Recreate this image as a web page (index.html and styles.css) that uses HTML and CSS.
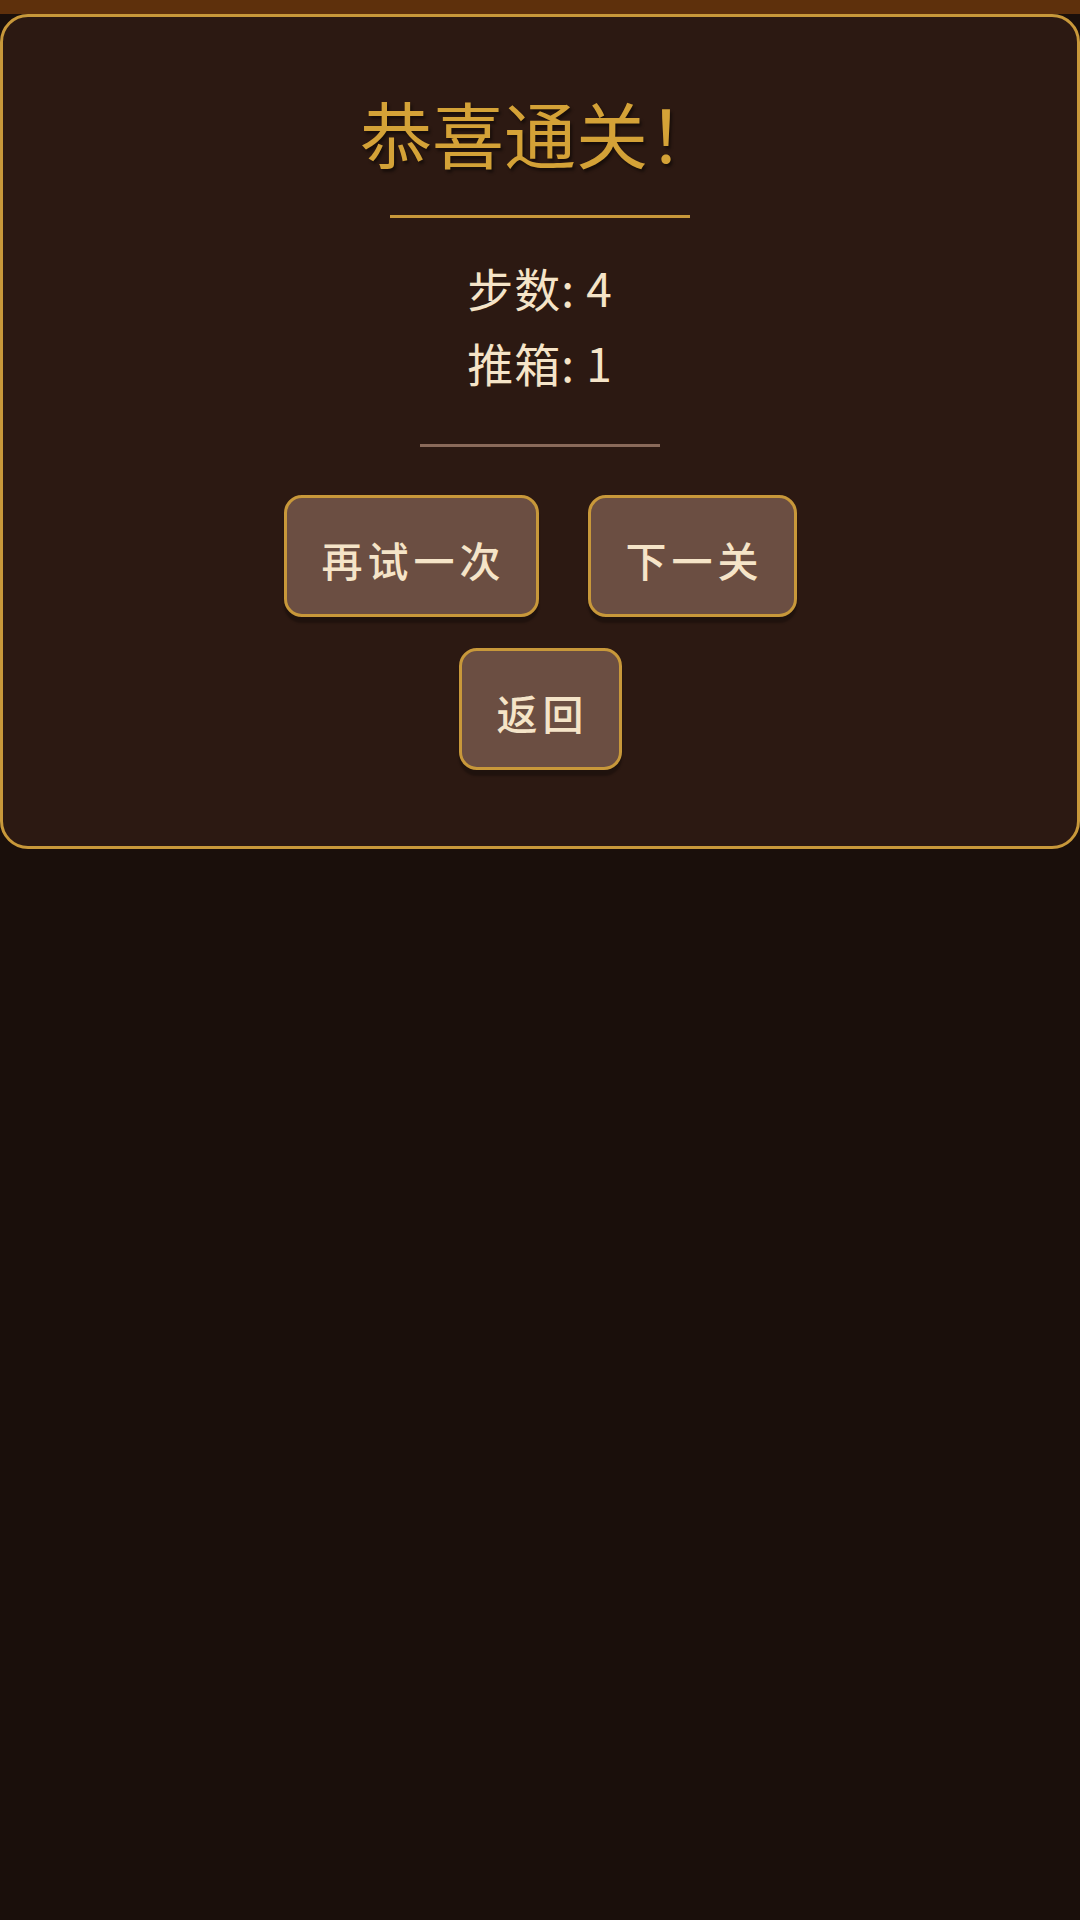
FILE: index.html
```html
<!DOCTYPE html>
<html lang="zh-CN">
  <head>
    <meta charset="UTF-8" />
    <meta name="viewport" content="width=device-width, initial-scale=1.0" />
    <title>恭喜通关</title>
    <link rel="stylesheet" href="styles.css">
  </head>
  <body>
    <div class="top-bar"></div>

    <div class="win-card">
      <h1 class="win-title">恭喜通关！</h1>
      <div class="divider gold"></div>

      <div class="stats">
        <p class="stat-line">步数: 4</p>
        <p class="stat-line">推箱: 1</p>
      </div>

      <div class="divider muted"></div>

      <div class="button-row">
        <button class="game-btn">再试一次</button>
        <button class="game-btn">下一关</button>
      </div>
      <div class="button-row">
        <button class="game-btn">返回</button>
      </div>
    </div>
  </body>
</html>
```

FILE: styles.css
```css
html,
body {
  margin: 0;
  padding: 0;
}
body {
  width: 1080px;
  min-height: 1920px;
  background-color: #1a0f0b;
  font-family: "Noto Sans CJK SC", "Noto Sans", sans-serif;
  color: #f5e4c8;
}
.top-bar {
  height: 14px;
  background: #5e300c;
}
.win-card {
  box-sizing: border-box;
  width: 1080px;
  height: 835px;
  background: #2c1912;
  border: 3px solid #c8983a;
  border-radius: 28px;
  padding-top: 76px;
  display: flex;
  flex-direction: column;
  align-items: center;
}
.win-title {
  margin: 0;
  font-size: 72px;
  line-height: 78px;
  font-weight: 400;
  color: #d4a237;
  text-shadow: 2px 3px 3px rgba(0, 0, 0, 0.45);
}
.divider {
  height: 3px;
}
.divider.gold {
  width: 300px;
  margin-top: 44px;
  background: #c8983a;
}
.divider.muted {
  width: 240px;
  margin-top: 44px;
  background: #8a6a5a;
}
.stats {
  margin-top: 32px;
  text-align: center;
}
.stat-line {
  margin: 0;
  font-size: 46px;
  line-height: 75px;
  letter-spacing: 1px;
}
.button-row {
  display: flex;
  justify-content: center;
  gap: 49px;
}
.divider.muted + .button-row {
  margin-top: 48px;
}
.button-row + .button-row {
  margin-top: 31px;
}
.game-btn {
  box-sizing: border-box;
  height: 122px;
  padding: 6px 30px 0 35px;
  background: #6b4e42;
  border: 3px solid #c8983a;
  border-radius: 18px;
  box-shadow: 0 6px 2px rgba(0, 0, 0, 0.28);
  font-family: "Noto Sans CJK SC", "Noto Sans", sans-serif;
  font-size: 41px;
  font-weight: 500;
  letter-spacing: 5px;
  color: #f5e4c8;
  cursor: pointer;
}
.game-btn:hover {
  background: #7a5a4c;
}
```
